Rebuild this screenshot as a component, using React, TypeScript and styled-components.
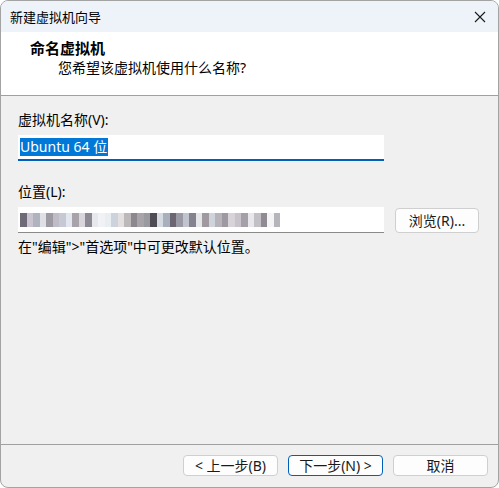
import styled, { createGlobalStyle } from 'styled-components';

const GlobalStyle = createGlobalStyle`
  html, body {
    margin: 0;
    padding: 0;
    background: #ffffff;
  }
  body {
    font-family: "Noto Sans", "Noto Sans CJK SC", sans-serif;
  }
`;

const mosaic = [
  '#6f6a78', '#c9c4cf', '#aeb3bf', '#dfe0e6', '#9d9aa4', '#bfbcc7', '#c6c9d3', '#e2e6ee',
  '#a8a3ab', '#d9d5dc', '#8e8a95', '#e7e7ee', '#f1f2f6', '#e9eef3', '#ccd3dd', '#e4e0e0',
  '#bdb8b9', '#8d8890', '#a8a4aa', '#9c9aa1', '#4f4c56', '#d6dbe2', '#a9b0bd', '#6b6672',
  '#9a9aa6', '#c0c4cf', '#858290', '#e5e6ea', '#a09aa0', '#cfd4dc', '#b6b3bb', '#9d98a2',
  '#d7d3d8', '#c8c2ca', '#a49fa9', '#e8e8ec', '#c3bfc7', '#8f8a94', '#f4f4f6', '#b5b5bb',
];

const Window = styled.div`
  width: 499px;
  height: 488px;
  box-sizing: border-box;
  border: 1px solid #a3a3a3;
  border-radius: 8px;
  overflow: hidden;
  display: flex;
  flex-direction: column;
  background: #f0f0f0;
  color: #000;
`;

const TitleBar = styled.div`
  height: 31px;
  display: flex;
  align-items: center;
  justify-content: space-between;
  padding: 0 9px;
  background: #eef3f9;
  font-size: 13px;
`;

const CloseButton = styled.div`
  width: 14px;
  height: 14px;
  margin-right: 2px;
  display: flex;
  align-items: center;
  justify-content: center;
`;

const Header = styled.div`
  height: 64px;
  background: #ffffff;
  border-bottom: 1px solid #a0a0a0;
  padding: 6px 0 0 29px;
  box-sizing: border-box;
`;

const HeaderTitle = styled.div`
  font-size: 15px;
  font-weight: bold;
  line-height: 20px;
`;

const HeaderSub = styled.div`
  font-size: 14px;
  line-height: 20px;
  padding-left: 28px;
`;

const Body = styled.div`
  flex: 1;
  padding: 14px 17px 0 17px;
  border-bottom: 1px solid #a0a0a0;
`;

const Label = styled.div<{ $gap?: number }>`
  font-size: 14px;
  line-height: 20px;
  margin-top: ${(p) => p.$gap ?? 0}px;
  margin-bottom: 5px;
`;

const Row = styled.div`
  display: flex;
  align-items: flex-start;
  gap: 11px;
`;

const TextBox = styled.div<{ $focused?: boolean }>`
  width: 366px;
  height: 26px;
  box-sizing: border-box;
  background: #ffffff;
  border-bottom: ${(p) => (p.$focused ? '2px solid #005fb8' : '1px solid #8a8a8a')};
  display: flex;
  align-items: center;
  padding-left: 2px;
  font-size: 14px;
`;

const Selected = styled.span`
  background: #0078d7;
  color: #ffffff;
  line-height: 18px;
  padding-right: 1px;
`;

const Mosaic = styled.div`
  display: flex;
  height: 14px;
  align-items: stretch;
`;

const Cell = styled.span`
  width: 6.5px;
  height: 100%;
`;

const Button = styled.button<{ $primary?: boolean }>`
  height: 21px;
  box-sizing: border-box;
  border: 1px solid ${(p) => (p.$primary ? '#005fb8' : '#cfcfcf')};
  border-radius: 4px;
  background: #fdfdfd;
  font-family: "Noto Sans", "Noto Sans CJK SC", sans-serif;
  font-size: 14px;
  line-height: 18px;
  padding: 0;
  color: #1a1a1a;
`;

const BrowseButton = styled(Button)`
  width: 84px;
  height: 25px;
  margin-top: 1px;
`;

const Hint = styled.div`
  font-size: 14px;
  line-height: 20px;
  margin-top: 4px;
`;

const Footer = styled.div`
  height: 42px;
  display: flex;
  justify-content: flex-end;
  align-items: flex-start;
  gap: 10px;
  padding: 10px 10px 0 0;
  box-sizing: border-box;
`;

const NavButton = styled(Button)`
  width: 95px;
`;

export default function App() {
  return (
    <>
      <GlobalStyle />
      <Window>
        <TitleBar>
          <span>新建虚拟机向导</span>
          <CloseButton>
            <svg width="12" height="12" viewBox="0 0 12 12">
              <path d="M1 1L11 11M11 1L1 11" stroke="#1a1a1a" strokeWidth="1.1" />
            </svg>
          </CloseButton>
        </TitleBar>
        <Header>
          <HeaderTitle>命名虚拟机</HeaderTitle>
          <HeaderSub>您希望该虚拟机使用什么名称?</HeaderSub>
        </Header>
        <Body>
          <Label>虚拟机名称(V):</Label>
          <TextBox $focused>
            <Selected>Ubuntu 64 位</Selected>
          </TextBox>
          <Label $gap={21}>位置(L):</Label>
          <Row>
            <TextBox>
              <Mosaic>
                {mosaic.map((c, i) => (
                  <Cell key={i} style={{ background: c }} />
                ))}
              </Mosaic>
            </TextBox>
            <BrowseButton>浏览(R)...</BrowseButton>
          </Row>
          <Hint>在"编辑"&gt;"首选项"中可更改默认位置。</Hint>
        </Body>
        <Footer>
          <NavButton>&lt; 上一步(B)</NavButton>
          <NavButton $primary>下一步(N) &gt;</NavButton>
          <NavButton>取消</NavButton>
        </Footer>
      </Window>
    </>
  );
}
